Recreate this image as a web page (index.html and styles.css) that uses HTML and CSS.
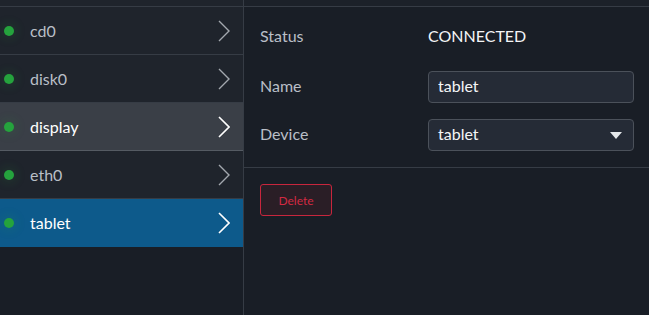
FILE: index.html
```html
<!DOCTYPE html>
<html lang="en">
<head>
  <meta charset="UTF-8">
  <title>Devices</title>
  <link rel="stylesheet" href="styles.css">
</head>
<body>
  <div class="layout">
    <div class="device-list">
      <div class="list-top"></div>
      <div class="device"><span class="dot"></span><span class="name">cd0</span><svg class="chev" width="12" height="22" viewBox="0 0 12 22"><polyline points="1,1 11,11 1,21"/></svg></div>
      <div class="device"><span class="dot"></span><span class="name">disk0</span><svg class="chev" width="12" height="22" viewBox="0 0 12 22"><polyline points="1,1 11,11 1,21"/></svg></div>
      <div class="device hover"><span class="dot"></span><span class="name">display</span><svg class="chev" width="12" height="22" viewBox="0 0 12 22"><polyline points="1,1 11,11 1,21"/></svg></div>
      <div class="device"><span class="dot"></span><span class="name">eth0</span><svg class="chev" width="12" height="22" viewBox="0 0 12 22"><polyline points="1,1 11,11 1,21"/></svg></div>
      <div class="device selected"><span class="dot"></span><span class="name">tablet</span><svg class="chev" width="12" height="22" viewBox="0 0 12 22"><polyline points="1,1 11,11 1,21"/></svg></div>
    </div>

    <div class="details">
      <div class="details-top"></div>
      <div class="form">
        <div class="label">Status</div>
        <div class="value">CONNECTED</div>
        <div class="label">Name</div>
        <input class="field" type="text" value="tablet">
        <div class="label">Device</div>
        <div class="field select">tablet<span class="arrow"></span></div>
      </div>
      <div class="actions">
        <button class="btn-delete">Delete</button>
      </div>
    </div>
  </div>
</body>
</html>
```

FILE: styles.css
```css
html, body {
  margin: 0;
  height: 100%;
}
body {
  background-color: #191e26;
  color: #b9bfc7;
  font-family: Lato, "Open Sans", sans-serif;
  font-size: 16px;
}
.layout {
  display: flex;
  height: 100%;
}
.device-list {
  width: 243px;
  border-right: 1px solid #363c45;
}
.list-top {
  height: 6px;
  background-color: #1f242c;
  border-bottom: 1px solid #363c45;
}
.device {
  display: flex;
  align-items: center;
  height: 47px;
  background-color: #1f242c;
  border-bottom: 1px solid #363c45;
  padding: 0 13px 0 4px;
}
.device.hover {
  background-color: #3a3f47;
  color: #fff;
  border-bottom-color: #555b63;
}
.device.selected {
  background-color: #0d5a8b;
  color: #fff;
  border-bottom-color: #0d5a8b;
}
.dot {
  flex-shrink: 0;
  width: 10px;
  height: 10px;
  border-radius: 50%;
  background-color: #25a33d;
  box-shadow: 0 0 10px 4px rgba(37, 163, 61, 0.1);
}
.name {
  flex: 1;
  margin-left: 16px;
}
.chev polyline {
  fill: none;
  stroke: #a3a8ae;
  stroke-width: 1.4;
}
.device.hover .chev polyline,
.device.selected .chev polyline {
  stroke: #fff;
  stroke-width: 1.6;
}
.details {
  flex: 1;
}
.details-top {
  height: 6px;
  background-color: #1c2129;
  border-bottom: 1px solid #363c45;
}
.form {
  display: grid;
  grid-template-columns: 168px 1fr;
  grid-template-rows: 35px 32px 32px;
  row-gap: 16px;
  align-items: center;
  padding: 13px 15px 16px 16px;
  border-bottom: 1px solid #363c45;
}
.label,
.value {
  padding-bottom: 4px;
}
.value {
  color: #f4f5f6;
}
.field {
  box-sizing: border-box;
  height: 32px;
  width: 100%;
  margin: 0;
  padding: 0 9px 3px;
  background-color: #252b36;
  border: 1px solid #4b515a;
  border-radius: 4px;
  color: #f4f5f6;
  font-family: inherit;
  font-size: 16px;
  outline: none;
}
.select {
  display: flex;
  align-items: center;
  justify-content: space-between;
}
.arrow {
  width: 0;
  height: 0;
  border-left: 6px solid transparent;
  border-right: 6px solid transparent;
  border-top: 7px solid #e4e7ea;
  margin: 3px 2px 0 0;
}
.actions {
  padding: 16px;
}
.btn-delete {
  width: 72px;
  height: 32px;
  background-color: #2a1e26;
  border: 1px solid #c8263d;
  border-radius: 3px;
  color: #d22a42;
  font-family: inherit;
  font-size: 12px;
}
```
